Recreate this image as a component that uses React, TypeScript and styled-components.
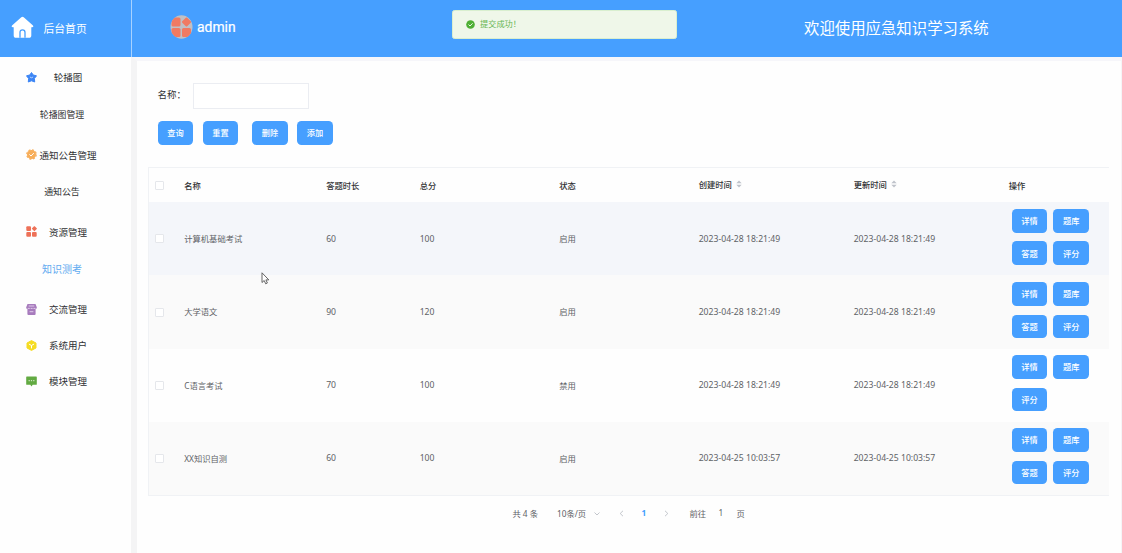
import React from 'react';
import styled, { createGlobalStyle, css } from 'styled-components';

const GlobalStyle = createGlobalStyle`
  * { box-sizing: border-box; }
  body {
    margin: 0;
    background: #fff;
    overflow: hidden;
    font-family: "Noto Sans", "Noto Sans CJK SC", sans-serif;
    color: #303133;
  }
`;

const Page = styled.div`
  display: flex;
  flex-direction: column;
  width: 1122px;
  height: 553px;
  overflow: hidden;
  background: #fefefe;
`;

const Header = styled.header`
  display: flex;
  flex: none;
  height: 57.4px;
  background: #469fff;
  color: #fff;
`;

const HomeLink = styled.div`
  display: flex;
  align-items: center;
  width: 132px;
  padding: 0 0 1.5px 11px;
  border-right: 1px solid #a8d2ff;
  font-size: 10.8px;
  svg { margin-right: 9.5px; }
`;

const UserBox = styled.div`
  display: flex;
  align-items: center;
  flex: 1;
  padding: 0 0 3px 38px;
  font-family: Roboto, sans-serif;
  font-size: 13.9px;
  -webkit-text-stroke: 0.2px #fff;
  svg { margin-right: 4px; }
`;

const Welcome = styled.div`
  width: 318px;
  font-size: 15.4px;
  line-height: 58px;
  white-space: nowrap;
`;

const Toast = styled.div`
  position: absolute;
  top: 10px;
  left: 452px;
  display: flex;
  align-items: center;
  gap: 5px;
  width: 225px;
  height: 29px;
  padding: 0 0 1px 13px;
  border: 1px solid #d9efcf;
  border-radius: 2.5px;
  background: #eff7e9;
  color: #67b653;
  font-size: 8.2px;
  line-height: 12px;
  span { padding-bottom: 0.4px; }
`;

const Body = styled.div`
  display: flex;
  flex: 1;
  min-height: 0;
`;

const Sidebar = styled.nav`
  width: 131px;
  flex: none;
  padding-top: 2px;
`;

const Group = styled.div<{ $open?: boolean }>`
  margin-bottom: ${p => (p.$open ? '4.7px' : '0')};
`;

const MenuItem = styled.div`
  display: flex;
  align-items: center;
  height: 36.2px;
  padding-left: 26px;
  font-size: 9.5px;
  white-space: nowrap;
  svg { flex: none; }
  span { width: 57px; margin-left: 2.5px; padding-bottom: 0.3px; text-align: center; }
`;

const SubItem = styled.div<{ $active?: boolean }>`
  height: 36.3px;
  padding-right: 7px;
  line-height: ${p => (p.$active ? '38.5px' : '37.5px')};
  text-align: center;
  font-size: ${p => (p.$active ? '10px' : '8.9px')};
  color: ${p => (p.$active ? '#60aaf0' : '#303133')};
`;

const Content = styled.main`
  flex: 1;
  min-width: 0;
  border-left: 6px solid #f4f4f5;
  border-top: 4px solid #f6f6fa;
  border-right: 1px solid #f5f5f7;
  padding: 21.5px 12px 0 11.4px;
`;

const SearchRow = styled.div`
  display: flex;
  align-items: center;
  padding-left: 9px;
  font-size: 9.5px;
`;

const SearchLabel = styled.label`
  padding-bottom: 3px;
`;

const SearchInput = styled.input`
  width: 116px;
  height: 26px;
  margin-left: 6.7px;
  border: 1px solid #ebedf2;
  background: #fff;
  outline: none;
`;

const Toolbar = styled.div`
  display: flex;
  gap: 9.4px;
  padding: 12.4px 0 0 9.3px;
`;

const Button = styled.button<{ $spaced?: boolean }>`
  width: 35.6px;
  height: 23.6px;
  margin: 0 0 0 ${p => (p.$spaced ? '4.5px' : '0')};
  padding: 0 0 1.4px;
  border: 0;
  border-radius: 4.5px;
  background: #469fff;
  color: #fff;
  font: 500 8.2px "Noto Sans", "Noto Sans CJK SC", sans-serif;
`;

const Table = styled.section`
  margin-top: 22.1px;
  border: 1px solid #f0f2f5;
  border-right: 0;
  width: 960.5px;
`;

const rowGrid = css`
  display: grid;
  grid-template-columns: 28.8px 142px 93.5px 139.5px 139.5px 155px 155px 106.2px;
  align-items: center;
`;

const HeadRow = styled.div`
  ${rowGrid}
  height: 34.4px;
  font-size: 8.3px;
  font-weight: 500;
`;

const Row = styled.div<{ $tone: string }>`
  ${rowGrid}
  height: 73.1px;
  background: ${p => p.$tone};
  color: #606266;
  font-size: 8.3px;
`;

const Cell = styled.div<{ $numeric?: boolean; $sortable?: boolean }>`
  display: flex;
  align-items: center;
  padding: 0 0 ${p => (p.$sortable ? '3px' : p.$numeric ? '0' : '1.2px')} 6px;
  white-space: nowrap;
  ${p => p.$numeric && 'font-size: 8.65px;'}
`;

const CheckCell = styled.div`
  display: flex;
  padding-left: 5.4px;
`;

const Checkbox = styled.span`
  width: 9px;
  height: 9px;
  border: 1px solid #e5e7eb;
  border-radius: 1px;
  background: #fff;
`;

const SortIcon = styled.svg`
  margin: 1.5px 0 0 4px;
`;

const Actions = styled.div`
  display: flex;
  flex-wrap: wrap;
  align-self: start;
  gap: 8.9px 6.1px;
  padding: 6.6px 0 0 9px;
`;

const Pagination = styled.footer`
  display: flex;
  align-items: center;
  height: 36px;
  padding-left: 364px;
  font-size: 8.3px;
  color: #606266;
  white-space: nowrap;
`;

const PageText = styled.span<{ $w: number; $current?: boolean }>`
  width: ${p => p.$w}px;
  padding-bottom: 1.8px;
  ${p => p.$current && 'color: #409eff; font-weight: 700;'}
`;

const Chevron = styled.svg<{ $gap: number }>`
  margin-right: ${p => p.$gap}px;
  fill: none;
  stroke: #b4b8bf;
  stroke-width: 0.8;
`;

const Pointer = styled.svg`
  position: absolute;
  left: 261px;
  top: 272px;
`;

const HomeIcon = () => (
  <svg width="23" height="23" viewBox="0 0 23 23">
    <path d="M10.300 1.200a1.800 1.800 0 0 1 2.400 0l9 8c1.100 1 .7 2-.6 2h-.8v8.300c0 1.500-.8 2.300-2.300 2.300H5c-1.500 0-2.300-.8-2.300-2.300v-8.300h-.8c-1.300 0-1.700-1-.6-2z" fill="#fff" />
    <path d="M9 21.800v-5.300c0-1.700.9-2.600 2.500-2.600s2.500.9 2.500 2.600v5.300" fill="none" stroke="#469fff" strokeWidth="1.300" />
  </svg>
);

const Avatar = () => (
  <svg width="23" height="24" viewBox="0 0 23 24">
    <defs><clipPath id="avatar"><ellipse cx="11.500" cy="12" rx="11" ry="11.800" /></clipPath></defs>
    <g clipPath="url(#avatar)">
      <rect width="23" height="24" fill="#bfc0c5" />
      <g fill="#f07a62">
        <rect x="1.500" y="2.500" width="9" height="9" rx="1.500" />
        <rect x="1.500" y="13" width="9" height="9" rx="1.500" />
        <rect x="12" y="13" width="9" height="9" rx="1.500" />
        <rect x="13" y="3.500" width="7" height="7" rx="1" transform="rotate(45 16.500 7)" />
      </g>
    </g>
  </svg>
);

const icons: Record<string, React.ReactNode> = {
  star: (
    <>
      <path d="M5.500.5 7.200 3l3.300.8-2.100 2.700.3 3.500-3.200-1.200L2.300 10l.3-3.500L.5 3.800 3.800 3z" fill="#3d86f5" stroke="#3d86f5" strokeWidth="1" strokeLinejoin="round" />
      <path d="M3.900 5q1.600 1.500 3.200 0" fill="none" stroke="#d5e5ff" strokeWidth=".8" />
    </>
  ),
  badge: (
    <>
      <circle cx="5.500" cy="5.500" r="4.500" fill="#f7ae5a" />
      <circle cx="5.500" cy="5.500" r="4.700" fill="none" stroke="#f7ae5a" strokeWidth="1.300" strokeDasharray="2 1.690" />
      <path d="m3.400 5.400 1.600 1.600 2.800-2.900" fill="none" stroke="#fff" strokeWidth="1" />
    </>
  ),
  grid: (
    <g fill="#ee7158">
      <rect x=".3" y=".3" width="4.700" height="4.700" rx="1" />
      <rect x=".3" y="6" width="4.700" height="4.700" rx="1" />
      <rect x="6" y="6" width="4.700" height="4.700" rx="1" />
      <rect x="6.500" y=".8" width="3.800" height="3.800" rx=".5" transform="rotate(45 8.400 2.700)" />
    </g>
  ),
  shop: (
    <>
      <path d="M1.500 0h8l1.300 3.200c.2 1-.4 1.600-1.200 1.600V10q0 1-1 1H2.400q-1 0-1-1V4.800C.6 4.800 0 4.200.2 3.200z" fill="#a77bbd" />
      <path d="M2.700 2h5.600M1.800 4.400h2M4.600 4.400h2M7.400 4.400h2M3.600 7.700h3.800" stroke="#eee0f5" strokeWidth=".8" />
    </>
  ),
  cube: (
    <>
      <path d="M5.500.6 10 3v5L5.500 10.400 1 8V3z" fill="#f5dc22" stroke="#f5dc22" strokeLinejoin="round" />
      <path d="m2.900 4 2.600 1.500L8.100 4M5.500 5.500v2.900" fill="none" stroke="#fff" strokeWidth="1" />
    </>
  ),
  chat: (
    <>
      <path d="M.8.600h9.400q.6 0 .6.600v7q0 .6-.6.600H6.700L5.500 10.400 4.300 8.800H.8q-.6 0-.6-.6v-7Q.2.600.8.600z" fill="#62aa42" />
      <path d="M2.600 4.700h1.200M4.900 4.700h1.200M7.200 4.700h1.200" stroke="#e4f3dd" strokeWidth="1" />
    </>
  ),
};

const menu: { icon: string; label: string; sub?: string; active?: boolean }[] = [
  { icon: 'star', label: '轮播图', sub: '轮播图管理' },
  { icon: 'badge', label: '通知公告管理', sub: '通知公告' },
  { icon: 'grid', label: '资源管理', sub: '知识测考', active: true },
  { icon: 'shop', label: '交流管理' },
  { icon: 'cube', label: '系统用户' },
  { icon: 'chat', label: '模块管理' },
];

const first = '2023-04-28 18:21:49';
const last = '2023-04-25 10:03:57';
const rows = [
  { name: '计算机基础考试', time: 60, score: 100, state: '启用', date: first, tone: '#f4f6fa' },
  { name: '大学语文', time: 90, score: 120, state: '启用', date: first, tone: '#fafafa' },
  { name: 'C语言考试', time: 70, score: 100, state: '禁用', date: first, tone: '#fefefe' },
  { name: 'XX知识自测', time: 60, score: 100, state: '启用', date: last, tone: '#fafafa' },
];

const Sort = () => (
  <SortIcon width="6" height="8" viewBox="0 0 6 8" fill="#bfc3cb">
    <path d="M3 .5 5.700 3.300H.3zM3 7.500.3 4.700h5.400z" />
  </SortIcon>
);

export default function App() {
  return (
    <Page>
      <GlobalStyle />
      <Header>
        <HomeLink><HomeIcon />后台首页</HomeLink>
        <UserBox><Avatar />admin</UserBox>
        <Welcome>欢迎使用应急知识学习系统</Welcome>
      </Header>
      <Body>
        <Sidebar>
          {menu.map(m => (
            <Group key={m.label} $open={!!m.sub}>
              <MenuItem>
                <svg width="11" height="11" viewBox="0 0 11 11">{icons[m.icon]}</svg>
                <span>{m.label}</span>
              </MenuItem>
              {m.sub && <SubItem $active={m.active}>{m.sub}</SubItem>}
            </Group>
          ))}
        </Sidebar>
        <Content>
          <SearchRow>
            <SearchLabel htmlFor="name">名称：</SearchLabel>
            <SearchInput id="name" />
          </SearchRow>
          <Toolbar>
            <Button>查询</Button>
            <Button>重置</Button>
            <Button $spaced>删除</Button>
            <Button>添加</Button>
          </Toolbar>
          <Table>
            <HeadRow>
              <CheckCell><Checkbox /></CheckCell>
              <Cell>名称</Cell>
              <Cell>答题时长</Cell>
              <Cell>总分</Cell>
              <Cell>状态</Cell>
              <Cell $sortable>创建时间<Sort /></Cell>
              <Cell $sortable>更新时间<Sort /></Cell>
              <Cell>操作</Cell>
            </HeadRow>
            {rows.map(r => (
              <Row key={r.name} $tone={r.tone}>
                <CheckCell><Checkbox /></CheckCell>
                <Cell>{r.name}</Cell>
                <Cell $numeric>{r.time}</Cell>
                <Cell $numeric>{r.score}</Cell>
                <Cell>{r.state}</Cell>
                <Cell $numeric>{r.date}</Cell>
                <Cell $numeric>{r.date}</Cell>
                <Actions>
                  <Button>详情</Button>
                  <Button>题库</Button>
                  {r.state === '启用' && <Button>答题</Button>}
                  <Button>评分</Button>
                </Actions>
              </Row>
            ))}
          </Table>
          <Pagination>
            <PageText $w={44.5}>共 4 条</PageText>
            <PageText $w={37}>10条/页</PageText>
            <Chevron $gap={19} width="6" height="6" viewBox="0 0 6 6"><path d="m.5 1.500 2.500 2.500 2.500-2.500" /></Chevron>
            <Chevron $gap={17.5} width="5" height="7" viewBox="0 0 5 7"><path d="M4 .8 1.200 3.500 4 6.200" /></Chevron>
            <PageText $w={22.5} $current>1</PageText>
            <Chevron $gap={20.5} width="5" height="7" viewBox="0 0 5 7"><path d="m1 .8 2.800 2.700L1 6.200" /></Chevron>
            <PageText $w={29}>前往</PageText>
            <PageText $w={18}>1</PageText>
            <PageText $w={10}>页</PageText>
          </Pagination>
        </Content>
      </Body>
      <Toast>
        <svg width="9" height="9" viewBox="0 0 9 9">
          <circle cx="4.500" cy="4.500" r="4.300" fill="#4eaf35" />
          <path d="m2.500 4.500 1.500 1.500 2.600-2.700" fill="none" stroke="#fff" strokeWidth=".9" />
        </svg>
        <span>提交成功！</span>
      </Toast>
      <Pointer width="9" height="13" viewBox="0 0 9 13">
        <path d="M1 .8v9.700l2.200-2 1.500 3.300 1.700-.8-1.500-3.100h2.900z" fill="#fff" stroke="#555" strokeWidth=".9" />
      </Pointer>
    </Page>
  );
}
